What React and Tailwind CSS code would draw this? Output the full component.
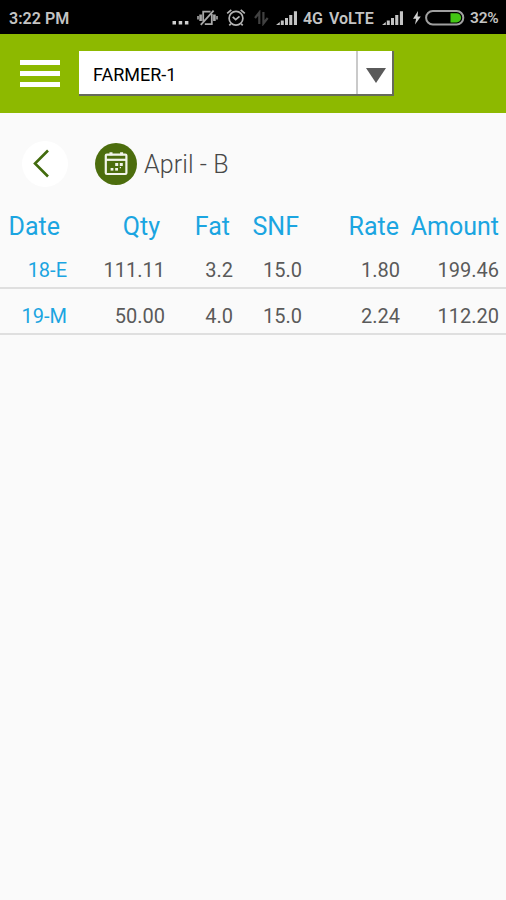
import React from "react";

const rows = [
    { date: "18-E", qty: "111.11", fat: "3.2", snf: "15.0", rate: "1.80", amount: "199.46" },
    { date: "19-M", qty: "50.00", fat: "4.0", snf: "15.0", rate: "2.24", amount: "112.20" },
];

export default function App() {
    return (
        <div className="w-full h-screen flex flex-col overflow-hidden bg-[#fafafa] font-['Roboto',sans-serif]">
            <StatusBar />
            <Header />
            <main className="flex-1">
                <PeriodBar title="April - B" />
                <Collections />
            </main>
        </div>
    );
}

function StatusBar() {
    return (
        <div className="h-[34px] shrink-0 bg-black flex items-center pl-[9px] pt-[2px] text-[16px] leading-none font-semibold text-[#c4c4c4] whitespace-nowrap">
            <span className="w-[163px] pt-px tracking-[0.05px]">3:22 PM</span>
            <svg width="18" height="16" viewBox="0 0 18 16" fill="#d0d0d0">
                <rect x="0.5" y="11" width="3.5" height="3.5" />
                <rect x="6.7" y="11" width="3.5" height="3.5" />
                <rect x="12.9" y="11" width="3.5" height="3.5" />
            </svg>
            <VibrateOffIcon />
            <AlarmIcon />
            <svg className="ml-[8px]" width="15" height="16" viewBox="0 0 15 16" fill="none" stroke="#414141" strokeWidth="2.2">
                <path d="M5.3 14V2.5L1 8M9.4 2v11.5l4.3-5.5" />
            </svg>
            <SignalIcon className="ml-[7px]" />
            <span className="ml-[5px] w-[26px] pt-px tracking-[-0.2px]">4G</span>
            <span className="w-[53px] pt-px">VoLTE</span>
            <SignalIcon />
            <svg className="ml-[9px]" width="8" height="16" viewBox="0 0 8 16" fill="#d0d0d0">
                <path d="M5 1 0 8.7h3.1L2 14.5l5.8-7.9H4.6z" />
            </svg>
            <svg className="ml-[4px]" width="40" height="16" viewBox="0 0 40 16">
                <rect x="1.1" y="1.1" width="37.2" height="13.4" rx="6.7" fill="#000" stroke="#a0a0a0" strokeWidth="2" />
                <path d="M25.5 3.2h6a4.6 4.6 0 0 1 0 9.2h-6z" fill="#43c614" />
            </svg>
            <span className="ml-[5px] pt-px text-[15.5px] tracking-[-0.2px]">32%</span>
        </div>
    );
}

function VibrateOffIcon() {
    return (
        <svg className="ml-[7px]" width="21" height="18" viewBox="0 0 21 18" fill="none" stroke="#a9a9a9" strokeWidth="1.8">
            <path d="M6.2 12.3V2.6h7.3M14.8 5v10.2H7.8" />
            <path d="M3.6 5.5v6.6M17.4 5.5v6.6" strokeWidth="2.6" />
            <path d="M1 7v3.6M20 7v3.6" strokeWidth="1.6" />
            <path d="M3.8 15.8 16.6 1.6" />
        </svg>
    );
}

function AlarmIcon() {
    return (
        <svg className="ml-[8px]" width="20" height="18" viewBox="0 0 20 18" fill="none" stroke="#b4b4b4" strokeWidth="1.7">
            <circle cx="10" cy="9.3" r="6.9" />
            <path d="M1.2 4.4 5.3.9M18.8 4.4 14.7.9M6.7 7.8l3 2.8 3.8-3.3M4.8 14.7l-1.5 1.7M15.2 14.7l1.5 1.7" />
        </svg>
    );
}

function SignalIcon({ className = "" }) {
    return (
        <svg className={className} width="22" height="16" viewBox="0 0 22 16" fill="#c4c4c4">
            <path d="M0 15 3.8 12v3zM4.8 10.5h3V15h-3zM9 8h3v7H9zM13.2 5h3.1v10h-3.1zM17.9 1.3H21V15h-3.1z" />
        </svg>
    );
}

function Header() {
    return (
        <header className="h-[79px] shrink-0 bg-[#8db900] flex items-start pl-[20px] pt-[17px]">
            <button className="mt-[9px] w-[40px] flex flex-col gap-[5.5px]" aria-label="Menu">
                <span className="h-[5.3px] w-full bg-white" />
                <span className="h-[5.3px] w-full bg-white" />
                <span className="h-[5.3px] w-full bg-white" />
            </button>
            <button className="ml-[19px] w-[315px] h-[45px] flex bg-white border-r-2 border-b-2 border-[#666a5c]" aria-label="Select farmer">
                <span className="flex-1 h-full flex items-center pl-[14px] pt-[3px] text-left text-[18px] text-black">FARMER-1</span>
                <span className="w-[36px] h-full border-l-2 border-[#cacaca] flex items-center justify-center pl-[2px] pt-[6px]">
                    <svg width="20" height="15" viewBox="0 0 20 15" fill="#5a5a5a">
                        <path d="M0 0h20l-10 15z" />
                    </svg>
                </span>
            </button>
        </header>
    );
}

function PeriodBar({ title }) {
    return (
        <div className="h-[92px] flex items-center pt-[9px] pl-[22px]">
            <button className="size-[46px] rounded-full bg-white flex items-center justify-center" aria-label="Previous">
                <svg width="46" height="46" viewBox="0 0 46 46" fill="none" stroke="#426b0d" strokeWidth="2.6">
                    <path d="M26 9.5 13 22.5l13 13" />
                </svg>
            </button>
            <span className="ml-[27px] size-[42px] rounded-full bg-[#4c6d0d] flex items-center justify-center">
                <CalendarIcon />
            </span>
            <h1 className="ml-[7px] pt-[2px] text-[25px] font-[350] tracking-[0.1px] text-[#484848] whitespace-nowrap">{title}</h1>
        </div>
    );
}

function CalendarIcon() {
    return (
        <svg width="24" height="24" viewBox="0 0 24 24" fill="none" stroke="#f2f5ea" strokeWidth="2.2">
            <rect x="1.8" y="2.6" width="20.6" height="19.4" rx="1" />
            <path d="M7 .2v3M17.6 .2v3" strokeWidth="3" />
            <path d="M2 7.8h20" strokeWidth="2.2" />
            <g fill="#f2f5ea" stroke="none">
                <rect x="11.2" y="11" width="3" height="3" />
                <rect x="15.8" y="11" width="3" height="3" />
                <rect x="15.8" y="15" width="1.2" height="1.2" />
                <rect x="6.6" y="16" width="2.8" height="2.6" />
                <rect x="11.2" y="16" width="2.8" height="2.6" />
            </g>
        </svg>
    );
}

function Collections() {
    return (
        <div className="text-right whitespace-nowrap">
            <div className="grid grid-cols-[67px_98px_68px_69px_98px_99px] h-[42px] pt-[2px] items-center text-[25px] text-[#1ba5e1]">
                <span className="pr-[7px]">Date</span>
                <span className="pr-[5px]">Qty</span>
                <span className="pr-[3px]">Fat</span>
                <span className="pr-[3px]">SNF</span>
                <span className="pr-[1px]">Rate</span>
                <span>Amount</span>
            </div>
            <div className="flex flex-col">
                {rows.map((row) => (
                    <div key={row.date} className="grid grid-cols-[67px_98px_68px_69px_98px_99px] h-[45.5px] first:h-[42px] items-end pb-[2px] border-b-2 border-[#dfdfdf] text-[20px] text-[#5a5a5a]">
                        <span className="text-[#1ba5e1]">{row.date}</span>
                        <span>{row.qty}</span>
                        <span>{row.fat}</span>
                        <span>{row.snf}</span>
                        <span>{row.rate}</span>
                        <span>{row.amount}</span>
                    </div>
                ))}
            </div>
        </div>
    );
}
